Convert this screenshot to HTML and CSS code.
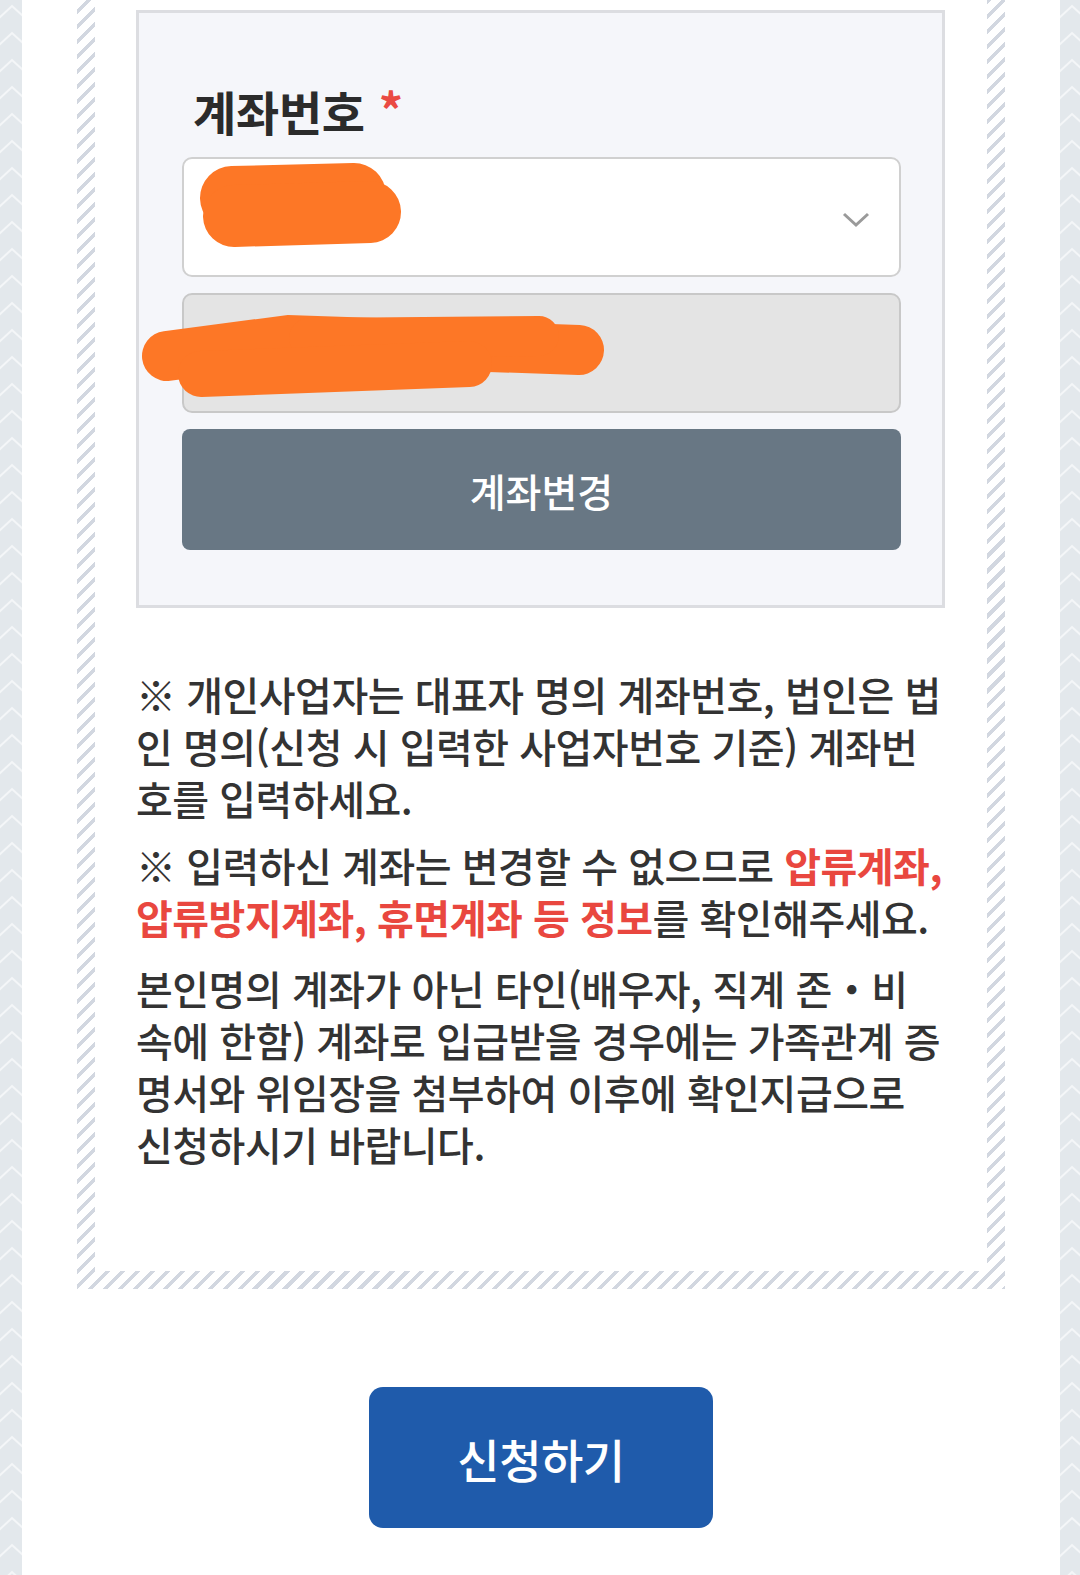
FILE: index.html
```html
<!DOCTYPE html>
<html lang="ko">
<head>
    <meta charset="UTF-8">
    <title>계좌번호 입력</title>
    <meta name="viewport" content="width=device-width,initial-scale=1">
    <link rel="stylesheet" href="styles.css">
</head>
<body>

<div class="side side-left">
    <svg width="100%" height="100%"><!--배경 무늬-->
        <defs>
            <pattern id="chev" width="22" height="27" patternUnits="userSpaceOnUse">
                <polyline points="-1,18 12,6 25,18" fill="none" stroke="#f4f6f8" stroke-width="2"/>
            </pattern>
        </defs>
        <rect width="100%" height="100%" fill="url(#chev)"/>
    </svg>
</div>

<div class="page">
    <div class="panel">
        <div class="panel-inner">
            <div class="box">
                <div class="title">계좌번호<span class="req">*</span></div>

                <div class="field field-select">
                    <svg class="blot" width="230" height="100" viewBox="0 0 230 100"><!--가림 표시-->
                        <path d="M50 42 L172 39" stroke="#fd7726" stroke-width="64" stroke-linecap="round" fill="none"/>
                        <path d="M52 60 L188 56" stroke="#fd7726" stroke-width="62" stroke-linecap="round" fill="none"/>
                    </svg>
                    <svg class="chevron" width="28" height="16" viewBox="0 0 28 16">
                        <polyline points="2,2 14,13 26,2" fill="none" stroke="#9a9a9a" stroke-width="3"/>
                    </svg>
                </div>

                <div class="field field-disabled">
                    <svg class="blot blot-wide" width="480" height="100" viewBox="0 0 480 100">
                        <path d="M28 58 L150 42 L440 52" stroke="#fd7726" stroke-width="50" stroke-linecap="round" fill="none"/>
                        <path d="M170 40 L400 38" stroke="#fd7726" stroke-width="40" stroke-linecap="round" fill="none"/>
                        <path d="M62 76 L330 66" stroke="#fd7726" stroke-width="46" stroke-linecap="round" fill="none"/>
                    </svg>
                </div>

                <button class="btn-change">계좌변경</button>
            </div>

            <div class="notes">
                <p class="note">※ 개인사업자는 대표자 명의 계좌번호, 법인은 법<br>인 명의(신청 시 입력한 사업자번호 기준) 계좌번<br>호를 입력하세요.</p>
                <p class="note">※ 입력하신 계좌는 변경할 수 없으므로 <b class="warn">압류계좌,</b><br><b class="warn">압류방지계좌, 휴면계좌 등 정보</b>를 확인해주세요.</p>
                <p class="desc">본인명의 계좌가 아닌 타인(배우자, 직계 존・비<br>속에 한함) 계좌로 입급받을 경우에는 가족관계 증<br>명서와 위임장을 첨부하여 이후에 확인지급으로<br>신청하시기 바랍니다.</p>
            </div>
        </div>
    </div>

    <div class="submit-wrap">
        <button class="btn-submit">신청하기</button>
    </div>
</div>

<div class="side side-right">
    <svg width="100%" height="100%">
        <rect width="100%" height="100%" fill="url(#chev)"/>
    </svg>
</div>

</body>
</html>
```

FILE: styles.css
```css
body{
    margin: 0;
    display: flex;
    min-height: 100vh;
    background: #fff;
    font-family: "Noto Sans CJK KR", "Noto Sans", sans-serif;
    color: #333;
    overflow: hidden;
}
.side{
    flex: none;
    background: #e3e8ec;
}
.side svg{
    display: block;
}
.side-left{
    width: 22px;
}
.side-right{
    width: 20px;
}
.page{
    flex: 1;
    background: #fff;
}

/* 줄무늬 테두리 */
.panel{
    margin: 0 55px;
    padding: 0 18px 18px;
    background: repeating-linear-gradient(135deg, #fff 0 7px, #d2d7e0 7px 10.6px);
}
.panel-inner{
    background: #fff;
    padding: 10px 42px 101px 41px;
}

.box{
    border: 3px solid #dcdde1;
    background: #f5f6fa;
    padding: 63px 41px 55px 43px;
}
.title{
    font-size: 47px;
    font-weight: 700;
    line-height: 64px;
    letter-spacing: -0.3px;
    color: #2b2b2b;
    padding-left: 11px;
    margin-bottom: 14px;
}
.req{
    color: #ea4a43;
    font-size: 48px;
    margin-left: 14px;
    vertical-align: 2px;
}

.field{
    position: relative;
    height: 120px;
    box-sizing: border-box;
    border: 2px solid #d0d0d0;
    border-radius: 10px;
    margin-bottom: 16px;
}
.field-select{
    background: #fff;
}
.field-disabled{
    background: #e4e4e4;
    border-color: #c8c8c8;
}
.chevron{
    position: absolute;
    right: 29px;
    top: 53px;
}
.blot{
    position: absolute;
    left: -2px;
    top: -2px;
}
.field-select .blot{
    left: -2px;
    top: -3px;
}
.blot-wide{
    left: -45px;
    top: 3px;
}

.btn-change{
    display: block;
    width: 100%;
    height: 121px;
    border: 0;
    border-radius: 8px;
    background: #687784;
    color: #fff;
    font-family: inherit;
    font-size: 39px;
    font-weight: 500;
    letter-spacing: 0;
}

.notes{
    margin-top: 60px;
    font-size: 40px;
    font-weight: 500;
    line-height: 52px;
    letter-spacing: -0.5px;
    white-space: nowrap;
}
.notes p{
    margin: 0;
}
.note + .note{
    margin-top: 15px;
}
.desc{
    margin-top: 19px !important;
}
.warn{
    color: #e9473f;
    font-weight: 700;
}

.submit-wrap{
    display: flex;
    justify-content: center;
    padding-top: 98px;
}
.btn-submit{
    width: 344px;
    height: 141px;
    border: 0;
    border-radius: 14px;
    background: #1f5bab;
    color: #fff;
    font-family: inherit;
    font-size: 46px;
    font-weight: 500;
    letter-spacing: -0.5px;
}
```
